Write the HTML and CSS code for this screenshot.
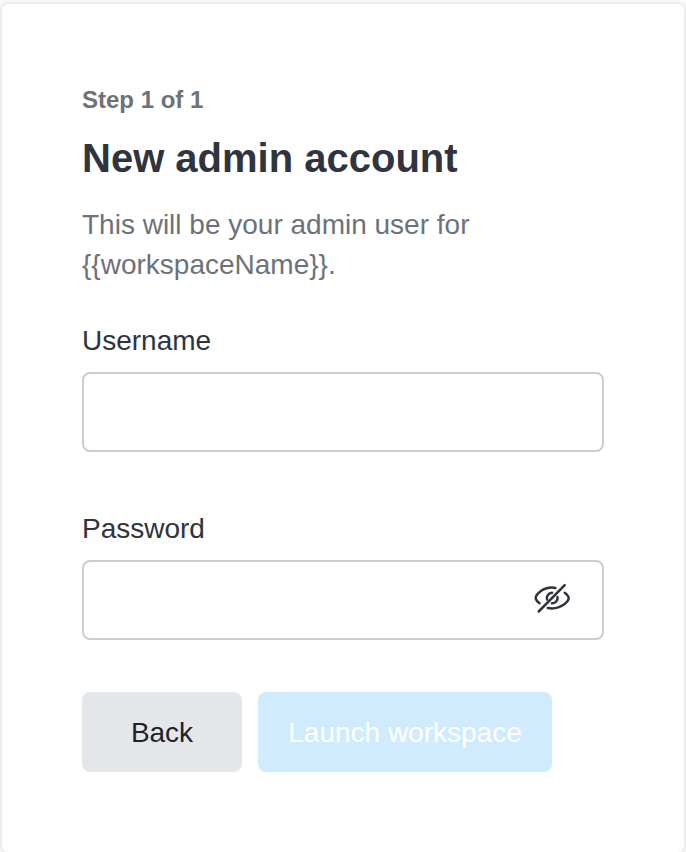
FILE: index.html
```html
<!DOCTYPE html>
<html lang="en">
<head>
<meta charset="utf-8">
<title>New admin account</title>
<link rel="stylesheet" href="styles.css">
</head>
<body>
<form class="card">
  <div class="step">Step 1 of 1</div>
  <h1 class="title">New admin account</h1>
  <p class="subtitle">This will be your admin user for {{workspaceName}}.</p>
  <label class="label" for="username">Username</label>
  <div class="field"><input class="input" id="username" type="text"></div>
  <label class="label" for="password">Password</label>
  <div class="field">
    <input class="input" id="password" type="password">
    <svg class="eye" viewBox="0 0 40 40" fill="none" stroke="#2f343d" stroke-width="2.5" stroke-linecap="round">
      <path d="M7.500 25.300C5 23.400 3.700 21.300 3.700 20C3.700 16.500 10.500 9.600 20 9.600C21.300 9.600 22.400 9.700 23.400 9.900"/>
      <path d="M32.800 14.700C35.200 16.700 36.700 18.800 36.700 20C36.700 23.500 29.500 30.400 20 30.400C18.600 30.400 17.200 30.300 15.800 30"/>
      <path d="M15 21.500A5.400 5.400 0 0 1 20 14.700M25.500 19A5.400 5.400 0 0 1 20 25.300"/>
      <path d="M6.700 33.500L32.700 7.200"/>
    </svg>
  </div>
  <div class="actions">
    <button class="button back" type="button">Back</button>
    <button class="button launch" type="submit" disabled>Launch workspace</button>
  </div>
</form>
</body>
</html>
```
FILE: styles.css
```css
* { box-sizing: border-box; }
body { margin: 0; padding-top: 2px; background: #f7f8fa; height: 852px; overflow: hidden; font-family: "Liberation Sans", Arial, sans-serif; }
.card { height: 852px; border: 2px solid #ebecef; border-radius: 8px; padding: 80px; background: #fff; }
.step { font-size: 24px; line-height: 32px; font-weight: 700; color: #6c727a; }
.title { margin: 16px 0 21px; font-size: 40px; line-height: 52px; font-weight: 700; color: #2f343d; }
.subtitle { margin: 0 0 36px; font-size: 28px; line-height: 40px; color: #6c727a; }
.label { display: block; font-size: 28px; line-height: 40px; color: #2f343d; }
.field { display: flex; position: relative; margin: 11px 0 57px; }
.input { width: 100%; height: 80px; border: 2px solid #cbced1; border-radius: 8px; padding: 0 30px; font: inherit; background: #fff; }
.eye { position: absolute; right: 32px; top: 18px; width: 40px; height: 40px; }
.actions { display: flex; gap: 16px; margin-top: -5px; }
.button { height: 80px; border: 0; border-radius: 8px; padding: 2px 0 0; font: 28px/40px "Liberation Sans", Arial, sans-serif; }
.back { width: 160px; background: #e4e7ea; color: #1f2329; }
.launch { width: 294px; background: #d1ebfe; color: #fff; }
```
